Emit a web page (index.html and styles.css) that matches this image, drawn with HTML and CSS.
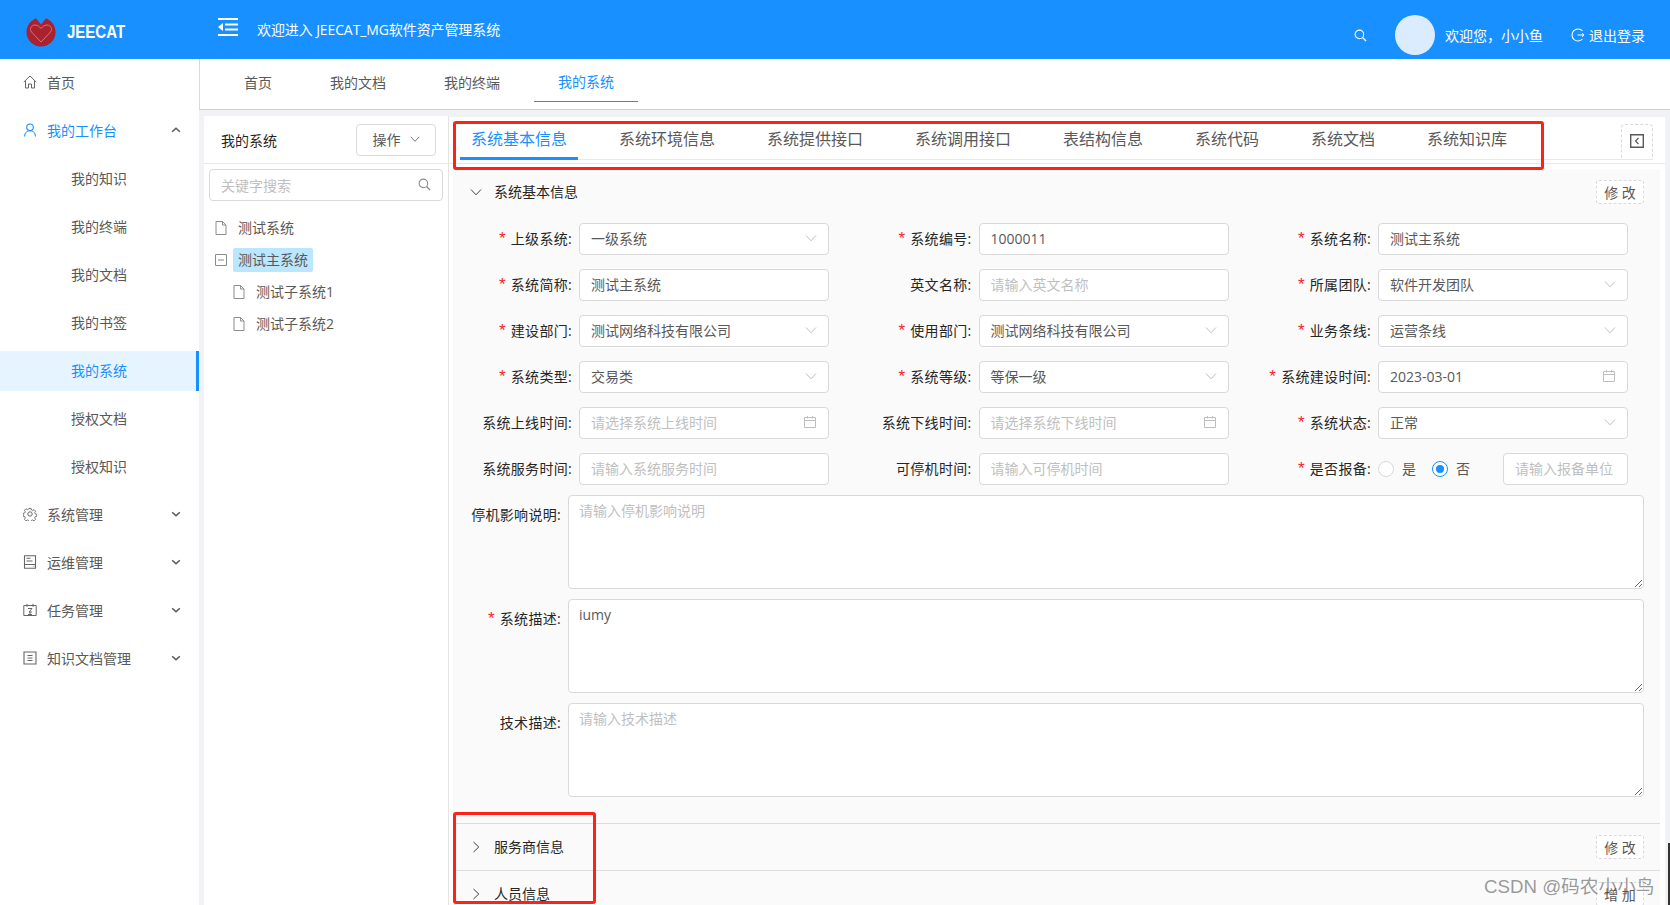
FILE: index.html
```html
<!DOCTYPE html>
<html lang="zh-CN">
<head>
<meta charset="utf-8">
<title>JEECAT</title>
<link rel="stylesheet" href="styles.css">
</head>
<body>
<svg class="sprites" width="0" height="0" aria-hidden="true">
  <symbol id="chev" viewBox="0 0 12 12"><path d="M1 3.5 6 8.8 11 3.5" fill="none" stroke="currentColor" stroke-width="1"/></symbol>
  <symbol id="cal" viewBox="0 0 14 14"><path d="M1.5 2.5h11v10h-11zM1.5 5.5h11M4.5 1v2.5M9.5 1v2.5" fill="none" stroke="currentColor" stroke-width="1"/></symbol>
  <symbol id="doc" viewBox="0 0 12 14"><path d="M1 .5h6.5L11 4v9.5H1zM7.5.5V4H11" fill="none" stroke="currentColor" stroke-width="1"/></symbol>
  <symbol id="search" viewBox="0 0 14 14"><circle cx="5.8" cy="5.8" r="4.6" fill="none" stroke="currentColor" stroke-width="1.2"/><path d="M9.2 9.2 13 13" fill="none" stroke="currentColor" stroke-width="1.4"/></symbol>
  <symbol id="menuchev" viewBox="0 0 10 10"><path d="M1.2 3.2 5 6.8 8.8 3.2" fill="none" stroke="currentColor" stroke-width="1.5"/></symbol>
</svg>
<div class="app">
  <header class="topbar">
    <div class="brand">
      <svg class="logo" viewBox="0 0 30 30"><circle cx="15" cy="15" r="14.500" fill="#a8222f"/><path d="M15 25 5.500 15c-2.500-3 0-7 3.500-7 2.500 0 4.500 1.500 6 3.500 1.500-2 3.500-3.500 6-3.500 3.500 0 6 4 3.500 7z" fill="#a8222f" stroke="#e0707c" stroke-width="1"/><path d="M9 0h12l-6 7.500z" fill="#1890ff"/></svg>
      <span class="brand-name">JEECAT</span>
    </div>
    <svg class="collapse" viewBox="0 0 20 18"><path d="M0 1h20M7 6.500h13M7 11.500h13M0 17h20" stroke="#fff" stroke-width="1.800" fill="none"/><path d="M5 5v8L0 9z" fill="#fff"/></svg>
    <div class="welcome">欢迎进入 JEECAT_MG软件资产管理系统</div>
    <div class="top-right">
      <svg class="top-search"><use href="#search"/></svg>
      <div class="avatar"></div>
      <div class="greet">欢迎您，小小鱼</div>
      <div class="logout">
        <svg class="logout-icon" viewBox="0 0 14 14"><path d="M11.500 3A6 6 0 1 0 11.500 11" fill="none" stroke="#fff" stroke-width="1.100"/><path d="M6.500 7H13M11 5.300 13 7l-2 1.700" fill="none" stroke="#fff" stroke-width="1"/></svg>
        <span>退出登录</span>
      </div>
    </div>
  </header>
  <div class="layout">
    <nav class="sidebar">
      <div class="mi"><svg class="mi-icon" viewBox="0 0 14 14"><path d="M.8 7 7 1l6.200 6M2.500 5.800V13h3V9h3v4h3V5.800" fill="none" stroke="currentColor" stroke-width="1"/></svg><span>首页</span></div>
      <div class="mi mi-open"><svg class="mi-icon" viewBox="0 0 14 14"><circle cx="7" cy="4.300" r="3.300" fill="none" stroke="currentColor" stroke-width="1.100"/><path d="M1.500 13.500c0-3.500 2.500-5.800 5.500-5.800s5.500 2.300 5.500 5.800" fill="none" stroke="currentColor" stroke-width="1.100"/></svg><span>我的工作台</span><svg class="mi-chev up"><use href="#menuchev"/></svg></div>
      <div class="mi sub">我的知识</div>
      <div class="mi sub">我的终端</div>
      <div class="mi sub">我的文档</div>
      <div class="mi sub">我的书签</div>
      <div class="mi sub active">我的系统</div>
      <div class="mi sub">授权文档</div>
      <div class="mi sub">授权知识</div>
      <div class="mi"><svg class="mi-icon" viewBox="0 0 14 14"><path d="M5.800.8h2.400l.4 1.800 1.300.6 1.600-1 1.700 1.700-1 1.600.6 1.300 1.700.4v2.400l-1.700.4-.6 1.300 1 1.600-1.700 1.700-1.600-1-1.300.6-.4 1.700H5.800l-.4-1.700-1.300-.6-1.600 1-1.700-1.700 1-1.600-.6-1.300-1.700-.4V6.200l1.700-.4.600-1.300-1-1.600 1.700-1.700 1.600 1 1.300-.6z" transform="translate(.7 .7) scale(.9)" fill="none" stroke="currentColor" stroke-width="1"/><circle cx="7" cy="7" r="2.200" fill="none" stroke="currentColor" stroke-width="1"/></svg><span>系统管理</span><svg class="mi-chev"><use href="#menuchev"/></svg></div>
      <div class="mi"><svg class="mi-icon" viewBox="0 0 14 14"><path d="M1.500.8h11v12.400h-11zM1.500 9.500h11M3.500 3.300h4M3.500 6h6M10.500 11.300h.8" fill="none" stroke="currentColor" stroke-width="1.100"/></svg><span>运维管理</span><svg class="mi-chev"><use href="#menuchev"/></svg></div>
      <div class="mi"><svg class="mi-icon" viewBox="0 0 14 14"><path d="M.8 2.500h12.400v10H.8zM4 .8v3M10 .8v3M5 5.500h4L6 9h3M7 9v2.500M5 11.500h4" fill="none" stroke="currentColor" stroke-width="1"/></svg><span>任务管理</span><svg class="mi-chev"><use href="#menuchev"/></svg></div>
      <div class="mi"><svg class="mi-icon" viewBox="0 0 14 14"><path d="M1 1h12v12H1zM4.500 4.500h5M4.500 7h5M4.500 9.500h5" fill="none" stroke="currentColor" stroke-width="1.100"/></svg><span>知识文档管理</span><svg class="mi-chev"><use href="#menuchev"/></svg></div>
    </nav>
    <main class="main">
      <div class="page-tabs">
        <div class="page-tab">首页</div>
        <div class="page-tab">我的文档</div>
        <div class="page-tab">我的终端</div>
        <div class="page-tab active">我的系统</div>
      </div>
      <div class="content">
        <aside class="tree-panel">
          <div class="tree-head">
            <span class="tree-title">我的系统</span>
            <div class="op-btn"><span>操作</span><svg class="op-chev"><use href="#chev"/></svg></div>
          </div>
          <div class="tree-search"><input class="tree-input" placeholder="关键字搜索"><svg class="tree-search-icon"><use href="#search"/></svg></div>
          <div class="tree">
            <div class="node"><svg class="node-icon"><use href="#doc"/></svg><span class="node-label">测试系统</span></div>
            <div class="node"><svg class="node-icon" viewBox="0 0 12 12"><path d="M.5.500h11v11H.500zM3 6h6" fill="none" stroke="currentColor" stroke-width="1"/></svg><span class="node-label selected">测试主系统</span></div>
            <div class="node child"><svg class="node-icon"><use href="#doc"/></svg><span class="node-label">测试子系统1</span></div>
            <div class="node child"><svg class="node-icon"><use href="#doc"/></svg><span class="node-label">测试子系统2</span></div>
          </div>
        </aside>
        <section class="detail">
          <div class="detail-tabs">
            <div class="dtab-list">
              <div class="dtab active">系统基本信息</div>
              <div class="dtab">系统环境信息</div>
              <div class="dtab">系统提供接口</div>
              <div class="dtab">系统调用接口</div>
              <div class="dtab">表结构信息</div>
              <div class="dtab">系统代码</div>
              <div class="dtab">系统文档</div>
              <div class="dtab">系统知识库</div>
            </div>
            <div class="fold-btn"><svg class="fold-icon" viewBox="0 0 14 14"><path d="M.7.700h12.600v12.600H.700z" fill="none" stroke="#595959" stroke-width="1.400"/><path d="M8.500 4 5.500 7l3 3" fill="none" stroke="#595959" stroke-width="1.200"/></svg></div>
          </div>
          <div class="pane">
            <div class="sec-head">
              <svg class="sec-arrow"><use href="#chev"/></svg>
              <span class="sec-title">系统基本信息</span>
              <span class="dash-btn">修 改</span>
            </div>
            <div class="form-grid">
              <div class="field"><label class="lbl req">上级系统:</label><div class="ctl select">一级系统<svg class="ctl-icon"><use href="#chev"/></svg></div></div>
              <div class="field"><label class="lbl req">系统编号:</label><input class="ctl" value="1000011"></div>
              <div class="field"><label class="lbl req">系统名称:</label><input class="ctl" value="测试主系统"></div>

              <div class="field"><label class="lbl req">系统简称:</label><input class="ctl" value="测试主系统"></div>
              <div class="field"><label class="lbl">英文名称:</label><input class="ctl" placeholder="请输入英文名称"></div>
              <div class="field"><label class="lbl req">所属团队:</label><div class="ctl select">软件开发团队<svg class="ctl-icon"><use href="#chev"/></svg></div></div>

              <div class="field"><label class="lbl req">建设部门:</label><div class="ctl select">测试网络科技有限公司<svg class="ctl-icon"><use href="#chev"/></svg></div></div>
              <div class="field"><label class="lbl req">使用部门:</label><div class="ctl select">测试网络科技有限公司<svg class="ctl-icon"><use href="#chev"/></svg></div></div>
              <div class="field"><label class="lbl req">业务条线:</label><div class="ctl select">运营条线<svg class="ctl-icon"><use href="#chev"/></svg></div></div>

              <div class="field"><label class="lbl req">系统类型:</label><div class="ctl select">交易类<svg class="ctl-icon"><use href="#chev"/></svg></div></div>
              <div class="field"><label class="lbl req">系统等级:</label><div class="ctl select">等保一级<svg class="ctl-icon"><use href="#chev"/></svg></div></div>
              <div class="field"><label class="lbl req">系统建设时间:</label><div class="ctl select">2023-03-01<svg class="ctl-icon cal"><use href="#cal"/></svg></div></div>

              <div class="field"><label class="lbl">系统上线时间:</label><div class="ctl select ph">请选择系统上线时间<svg class="ctl-icon cal"><use href="#cal"/></svg></div></div>
              <div class="field"><label class="lbl">系统下线时间:</label><div class="ctl select ph">请选择系统下线时间<svg class="ctl-icon cal"><use href="#cal"/></svg></div></div>
              <div class="field"><label class="lbl req">系统状态:</label><div class="ctl select">正常<svg class="ctl-icon"><use href="#chev"/></svg></div></div>

              <div class="field"><label class="lbl">系统服务时间:</label><input class="ctl" placeholder="请输入系统服务时间"></div>
              <div class="field"><label class="lbl">可停机时间:</label><input class="ctl" placeholder="请输入可停机时间"></div>
              <div class="field"><label class="lbl req">是否报备:</label>
                <div class="radios">
                  <span class="radio"></span><span class="radio-text">是</span>
                  <span class="radio on"></span><span class="radio-text">否</span>
                  <input class="ctl unit" placeholder="请输入报备单位">
                </div>
              </div>
            </div>
            <div class="text-rows">
              <div class="text-row"><label class="lbl wide">停机影响说明:</label><textarea class="area" placeholder="请输入停机影响说明"></textarea></div>
              <div class="text-row"><label class="lbl wide req">系统描述:</label><textarea class="area">iumy</textarea></div>
              <div class="text-row"><label class="lbl wide">技术描述:</label><textarea class="area" placeholder="请输入技术描述"></textarea></div>
            </div>
            <div class="sec-head ruled">
              <svg class="sec-arrow right"><use href="#chev"/></svg>
              <span class="sec-title">服务商信息</span>
              <span class="dash-btn">修 改</span>
            </div>
            <div class="sec-head ruled">
              <svg class="sec-arrow right"><use href="#chev"/></svg>
              <span class="sec-title">人员信息</span>
              <span class="dash-btn">增 加</span>
            </div>
          </div>
        </section>
      </div>
    </main>
  </div>
  <div class="mark mark-tabs"></div>
  <div class="mark mark-secs"></div>
  <div class="watermark">CSDN @码农小小鸟</div>
  <div class="scroll-edge"></div>
</div>
</body>
</html>
```

FILE: styles.css
```css
* { box-sizing: border-box; }
html, body { margin: 0; height: 100%; overflow: hidden; }
body {
  font-family: "Open Sans", "Noto Sans CJK SC", sans-serif;
  font-size: 14px;
  color: #595959;
  background: #fff;
}
.sprites { position: absolute; }
.app { position: relative; width: 1670px; height: 905px; display: flex; flex-direction: column; overflow: hidden; }

/* top bar */
.topbar { height: 59px; flex: none; background: #1890ff; color: #fff; display: flex; align-items: center; }
.brand { width: 218px; display: flex; align-items: center; padding-left: 26px; flex: none; padding-top: 4px; }
.logo { width: 30px; height: 30px; flex: none; }
.brand-name { font-family: "Liberation Sans", sans-serif; font-weight: 700; font-size: 19px; margin-left: 11px; display: inline-block; transform: scaleX(.79); transform-origin: left center; }
.collapse { width: 20px; height: 18px; flex: none; margin-top: -5px; }
.welcome { margin-left: 19px; white-space: nowrap; letter-spacing: -.1px; margin-top: -2px; }
.top-right { margin-left: auto; display: flex; align-items: center; padding-top: 11px; margin-right: 25px; height: 59px; }
.top-search { width: 13px; height: 13px; color: #fff; flex: none; }
.avatar { width: 40px; height: 40px; border-radius: 50%; background: #dcecff; margin-left: 28px; flex: none; }
.greet { margin-left: 10px; width: 98px; white-space: nowrap; font-family: "Noto Sans CJK TC", sans-serif; }
.logout { margin-left: 28px; display: flex; align-items: center; gap: 4px; }
.logout-icon { width: 14px; height: 14px; }

/* layout */
.layout { flex: 1; display: flex; min-height: 0; }
.sidebar { width: 199px; flex: none; background: #fff; padding-top: 4px; }
.mi { height: 40px; margin-bottom: 8px; display: flex; align-items: center; padding-left: 23px; padding-bottom: 2px; white-space: nowrap; }
.mi-icon { width: 14px; height: 14px; flex: none; margin-right: 10px; color: #666; }
.mi-open { color: #1890ff; }
.mi-open .mi-icon { color: #1890ff; }
.mi-chev { width: 10px; height: 10px; margin-left: auto; margin-right: 18px; color: #595959; }
.mi-chev.up { transform: rotate(180deg); }
.sub { padding-left: 71px; }
.sub.active { background: #e6f4ff; color: #1890ff; border-right: 3px solid #1890ff; }

.main { flex: 1; min-width: 0; display: flex; flex-direction: column; background: #f0f2f5; }
.page-tabs { height: 51px; flex: none; background: #fff; display: flex; padding-left: 20px; border-left: 1px solid #d9d9d9; border-bottom: 1px solid #d0d0d0; }
.page-tab { padding: 0 24px; margin-right: 10px; height: 43px; display: flex; align-items: center; padding-top: 2px; white-space: nowrap; }
.page-tab.active { color: #1890ff; border-bottom: 1px solid #1890ff; }

.content { flex: 1; min-height: 0; display: flex; padding: 6px 5px 0; }

/* tree */
.tree-panel { width: 244px; flex: none; background: #fff; }
.tree-head { height: 48px; display: flex; align-items: flex-start; justify-content: space-between; padding: 8px 12px 0 17px; border-bottom: 1px solid #e8e8e8; }
.tree-title { color: #262626; line-height: 32px; margin-top: 1px; }
.op-btn { width: 80px; height: 32px; border: 1px solid #d9d9d9; border-radius: 4px; display: flex; align-items: center; justify-content: center; gap: 9px; padding-bottom: 2px; }
.op-chev { width: 10px; height: 10px; color: #595959; }
.tree-search { margin: 5px 5px 0; height: 32px; position: relative; }
.tree-input { width: 100%; height: 100%; border: 1px solid #d9d9d9; border-radius: 4px; padding: 0 34px 0 11px; font: inherit; outline: 0; }
.tree-input::placeholder, .ctl::placeholder, .area::placeholder { color: #bfbfbf; opacity: 1; }
.tree-search-icon { position: absolute; right: 12px; top: 9px; width: 13px; height: 13px; color: #8c8c8c; }
.tree { padding: 11px 0 0 11px; }
.node { height: 32px; display: flex; align-items: center; }
.node-icon { width: 12px; height: 14px; color: #8c8c8c; flex: none; }
.node-label { margin-left: 6px; padding: 0 5px; height: 24px; line-height: 24px; border-radius: 2px; white-space: nowrap; }
.node-label.selected { background: #bae7ff; width: 80px; }
.child { padding-left: 18px; }

/* detail */
.detail { flex: 1; min-width: 0; background: #fff; border-left: 1px solid #e4e4e4; border-top: 1px solid #f0f0f0; display: flex; flex-direction: column; }
.detail-tabs { height: 47px; flex: none; padding: 7px 12px 0 11px; border-bottom: 1px solid #e8e8e8; display: flex; align-items: flex-start; }
.dtab-list { flex: 1; height: 36px; display: flex; border-bottom: 1px solid #e8e8e8; }
.dtab { padding: 0 10.500px 0 11px; margin-right: 30.500px; height: 36px; line-height: 31px; font-size: 16px; white-space: nowrap; }
.dtab.active { color: #1890ff; border-bottom: 3px solid #1890ff; }
.fold-btn { width: 32px; height: 36px; border: 1px dashed #d9d9d9; border-bottom: 1px solid #e8e8e8; border-radius: 4px 4px 0 0; display: flex; align-items: center; justify-content: center; padding-bottom: 2px; }
.fold-icon { width: 14px; height: 14px; }

.pane { flex: 1; min-height: 0; margin: 5px 5px 0 4px; background: #fafafa; }
.sec-head { height: 46px; display: flex; align-items: center; padding: 0 16px 0 17px; }
.sec-head.ruled { height: 47px; border-top: 1px solid #dcdcdc; }
.sec-arrow { width: 12px; height: 12px; color: #404040; flex: none; }
.sec-arrow.right { transform: rotate(-90deg); }
.sec-title { margin-left: 12px; margin-top: -2px; color: #262626; }
.dash-btn { margin-left: auto; width: 48px; height: 24px; background: #fff; border: 1px dashed #d9d9d9; border-radius: 3px; display: flex; align-items: center; justify-content: center; color: #595959; white-space: pre; }

.form-grid { margin: 8px 0 0 6px; display: grid; grid-template-columns: repeat(3, 370px); column-gap: 29.500px; row-gap: 14px; }
.field { display: flex; height: 32px; align-items: center; }
.lbl { width: 120px; flex: none; text-align: right; padding-right: 7px; padding-bottom: 2px; color: #262626; white-space: nowrap; letter-spacing: .3px; }
.lbl.req::before { content: "*"; color: #f5222d; margin-right: 5px; font-family: "Liberation Sans", sans-serif; font-size: 17px; line-height: 1; }
.ctl { width: 250px; height: 32px; border: 1px solid #d9d9d9; border-radius: 4px; background: #fff; padding: 0 11px 2px; font: inherit; color: #595959; outline: 0; }
.select { display: flex; align-items: center; justify-content: space-between; white-space: nowrap; }
.select.ph { color: #bfbfbf; }
.ctl-icon { width: 12px; height: 12px; color: #bfbfbf; flex: none; }
.ctl-icon.cal { width: 14px; height: 14px; }
.radios { width: 250px; display: flex; align-items: center; }
.radio { width: 16px; height: 16px; border: 1px solid #d9d9d9; border-radius: 50%; background: #fff; flex: none; display: flex; align-items: center; justify-content: center; }
.radio.on { border-color: #1890ff; }
.radio.on::after { content: ""; width: 8px; height: 8px; border-radius: 50%; background: #1890ff; }
.radio-text { margin: -2px 16px 0 8px; }
.ctl.unit { width: 125px; margin-left: auto; }

.text-rows { margin: 10px 16px 26px 6px; display: grid; row-gap: 10px; }
.text-row { display: flex; align-items: flex-start; }
.lbl.wide { width: 109px; line-height: 22px; margin-top: 9px; }
.area { flex: 1; height: 94px; border: 1px solid #d9d9d9; border-radius: 4px; padding: 4px 10px; font: inherit; line-height: 22px; color: #595959; background: #fff; outline: 0; resize: vertical; display: block; }

/* overlays: annotations drawn over the screenshot */
.mark { position: absolute; border: 3px solid #ff2116; border-radius: 3px; pointer-events: none; }
.mark-tabs { left: 453px; top: 121px; width: 1091px; height: 49px; }
.mark-secs { left: 453px; top: 812px; width: 143px; height: 92px; }
.watermark { position: absolute; left: 1484px; top: 871px; font-family: "Liberation Sans", "Noto Sans CJK SC", sans-serif; font-size: 18.700px; color: rgba(70,70,70,.55); white-space: nowrap; pointer-events: none; }
.scroll-edge { position: absolute; right: 0; top: 843px; width: 2px; height: 62px; background: #333; }
```
